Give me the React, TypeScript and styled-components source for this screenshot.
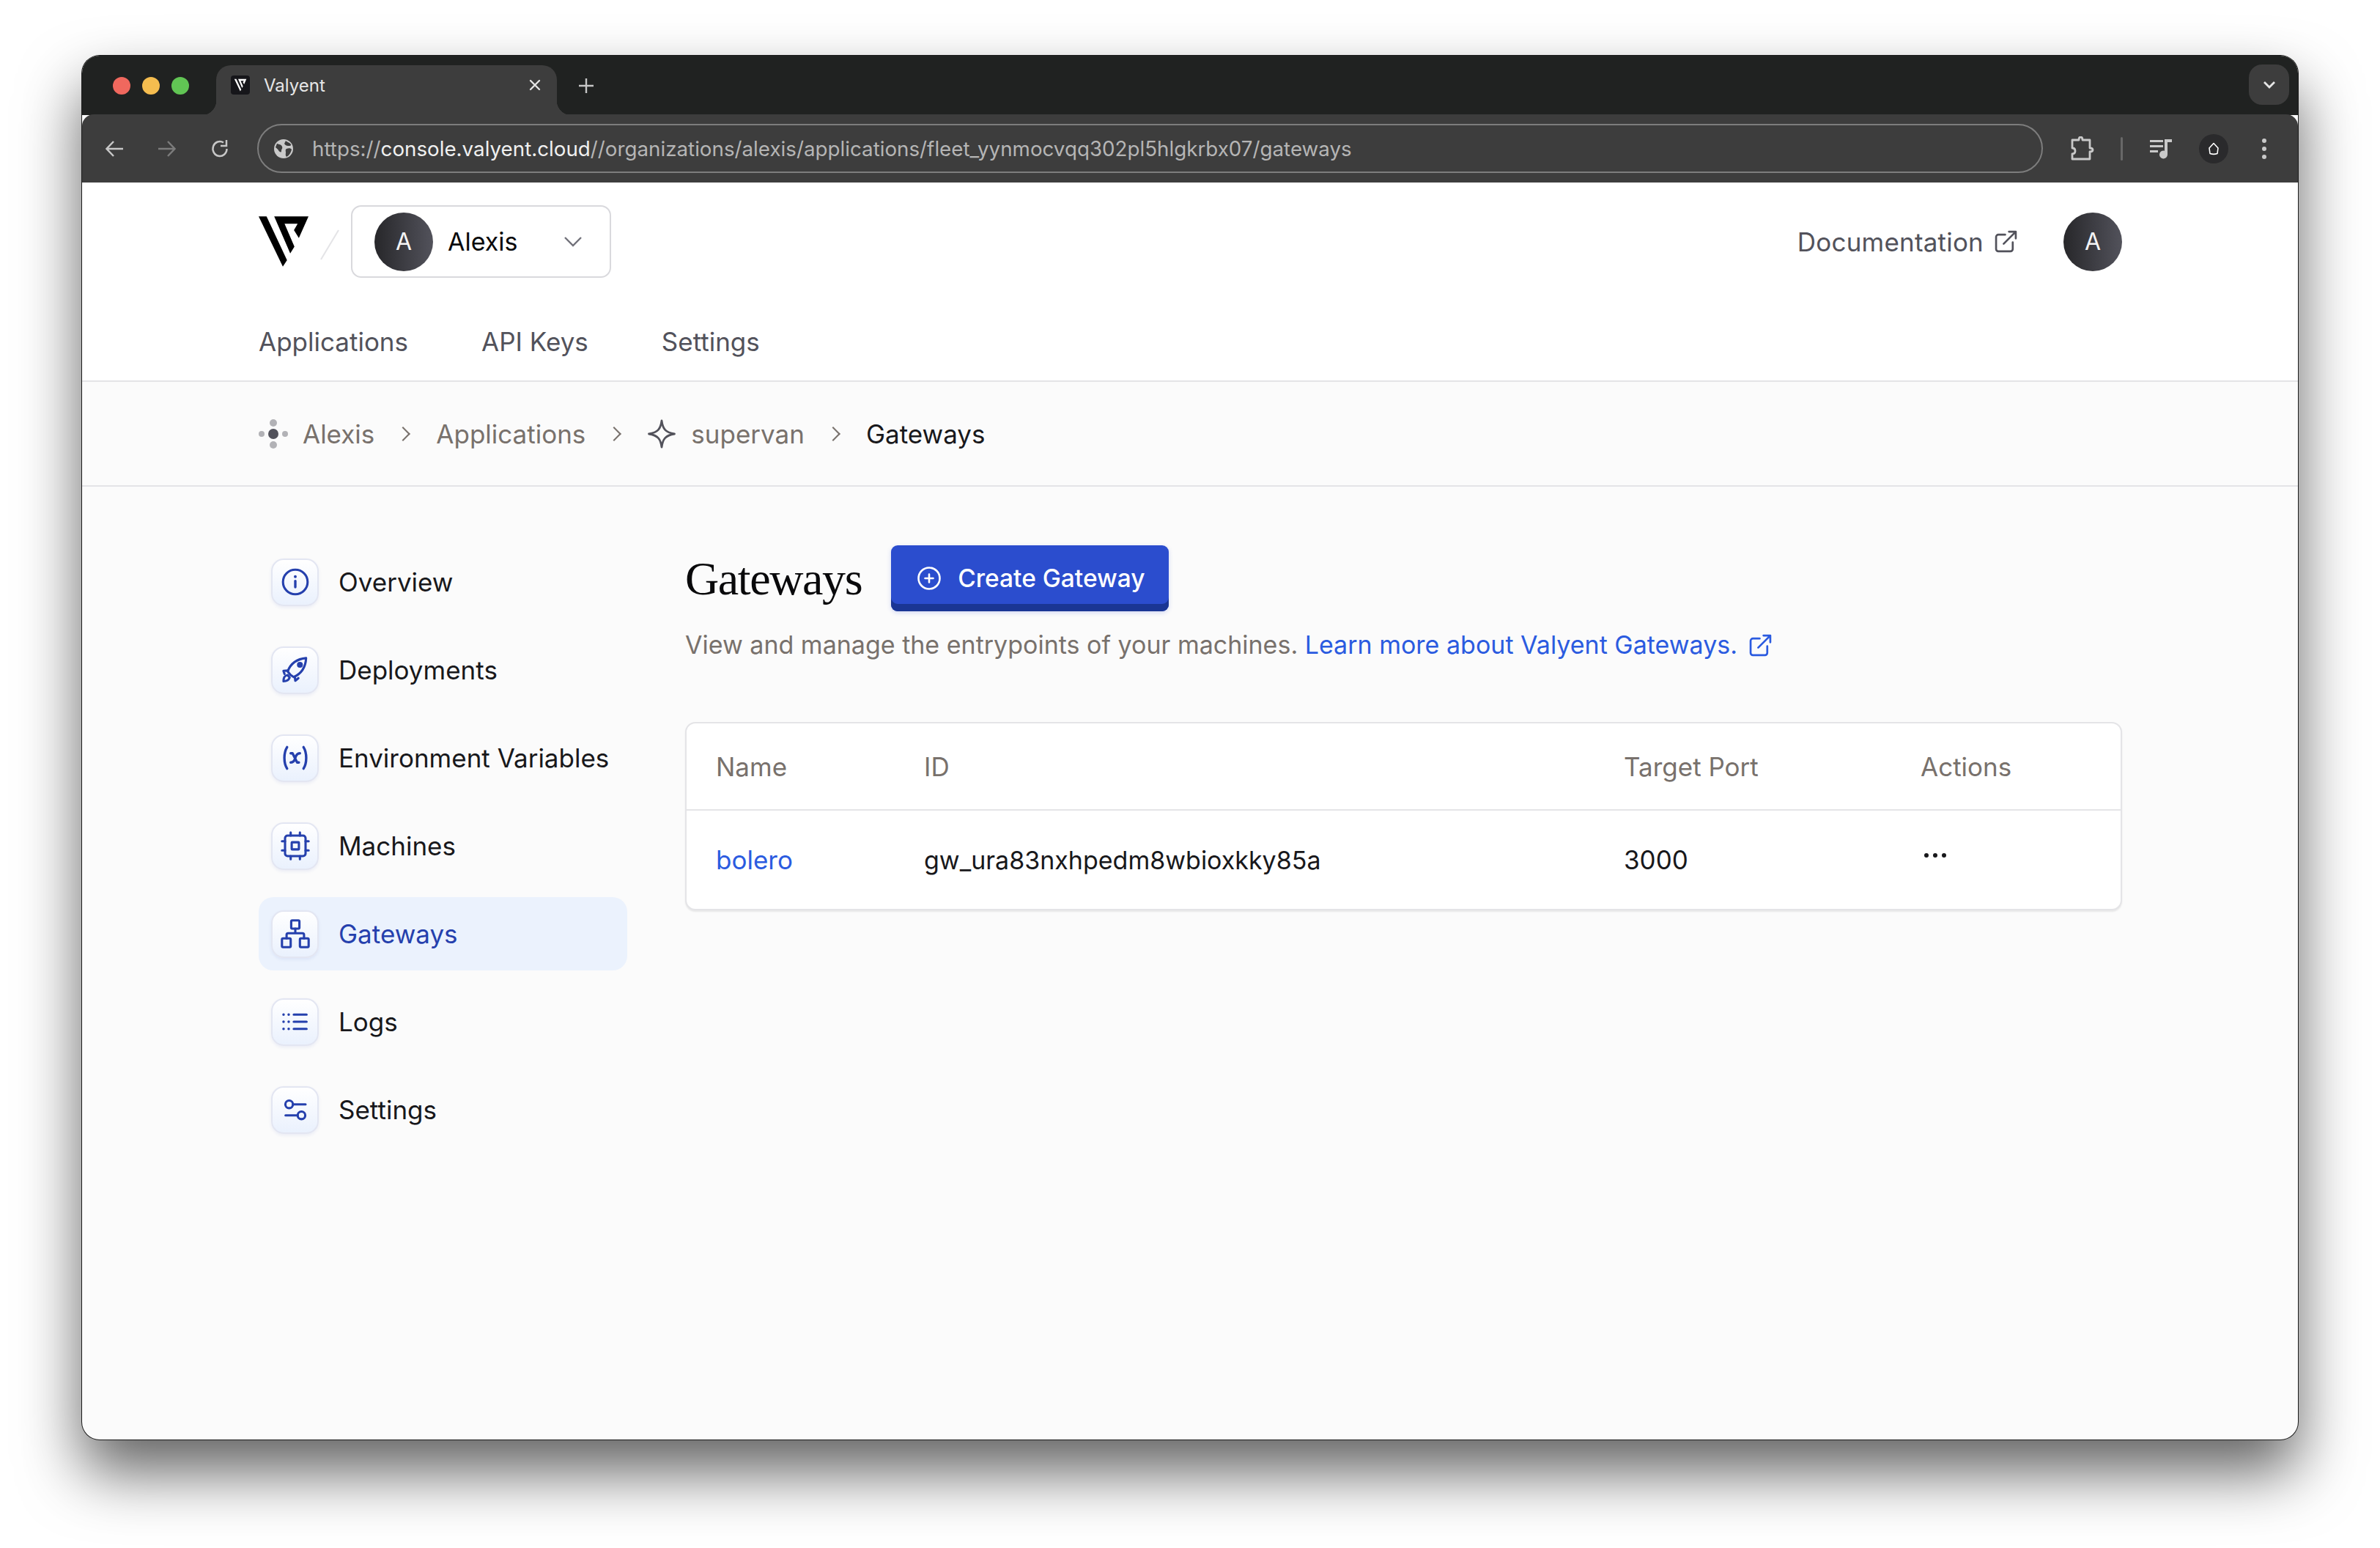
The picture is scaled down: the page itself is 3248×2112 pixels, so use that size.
import React from "react";
import styled, { createGlobalStyle } from "styled-components";

const ICON_BLUE = "#2540ad";

const GlobalStyle = createGlobalStyle`
  html, body {
    margin: 0;
    padding: 0;
    background: #fff;
    overflow: hidden;
  }
  * {
    box-sizing: border-box;
  }
  body {
    font-family: Inter, "Liberation Sans", sans-serif;
  }
`;

const ExternalIcon: React.FC<{ size: number; color: string }> = ({ size, color }) => (
  <svg width={size} height={size} viewBox="0 0 30 30" fill="none" stroke={color} strokeWidth="2.6" strokeLinecap="round" strokeLinejoin="round">
    <path d="M14 6H5a3 3 0 0 0-3 3v16a3 3 0 0 0 3 3h16a3 3 0 0 0 3-3v-9" />
    <path d="M12 18 27.5 2.5M19 2h9v9" />
  </svg>
);

const navIcons: Record<string, React.ReactNode> = {
  info: (
    <>
      <circle cx="15" cy="15" r="12" />
      <path d="M15 14v6" strokeWidth="2.4" />
      <path d="M15 9.800v.1" strokeWidth="2.800" />
    </>
  ),
  rocket: (
    <>
      <path d="M10.500 20 7.500 16.500C10 10 14.500 4.500 25.500 3.500c-.5 10.500-5.500 15.500-12 18.500Z" />
      <circle cx="19.500" cy="10" r="1.800" fill={ICON_BLUE} />
      <path d="M8 15.500 3.500 16l1 3M14.500 21.500l.5 4 3-2.500" />
      <path d="M7.500 20c-2.500.5-4 1.500-4 6 3.500 0 5-1 6-3.500Z" />
    </>
  ),
  variable: (
    <>
      <path d="M7 4.500C3.500 10 3.500 20 7 25.500M23 4.500c3.500 5.500 3.500 15.500 0 21" strokeWidth="2.400" />
      <path d="M10.500 10.500h1.800l4.500 9h1.700M19.500 10.500c-3 0-4 2.500-4.500 4.500s-2 4.500-4.500 4.500" strokeWidth="2.400" />
    </>
  ),
  cpu: (
    <>
      <rect x="5" y="5" width="20" height="20" rx="2.500" />
      <rect x="11.500" y="11.500" width="7" height="7" rx="0.500" />
      <path d="M10.500 2v3M19.500 2v3M10.500 25v3M19.500 25v3M2 10.500h3M2 19.500h3M25 10.500h3M25 19.500h3" />
    </>
  ),
  network: (
    <>
      <rect x="11" y="2" width="8" height="8" rx="1" />
      <rect x="2" y="19.500" width="8.500" height="8.500" rx="1" />
      <rect x="19.500" y="19.500" width="8.500" height="8.500" rx="1" />
      <path d="M15 10v4.500M6.500 19.500v-3.500a1.500 1.500 0 0 1 1.500-1.500h14a1.500 1.500 0 0 1 1.500 1.500v3.500" />
    </>
  ),
  list: (
    <>
      <path d="M3.500 8h.1M8.500 8h.1M3.500 15h.1M8.500 15h.1M3.500 22h.1M8.500 22h.1" strokeWidth="2.400" />
      <path d="M13.500 8h12.500M13.500 15h12.500M13.500 22h12.500" />
    </>
  ),
  sliders: (
    <>
      <circle cx="9" cy="9.800" r="3.700" />
      <path d="M12.700 9.800H25" />
      <circle cx="21" cy="20.500" r="3.700" />
      <path d="M5.500 20.500h11.800" />
    </>
  ),
};

const sideItems = [
  { label: "Overview", icon: "info" },
  { label: "Deployments", icon: "rocket" },
  { label: "Environment Variables", icon: "variable" },
  { label: "Machines", icon: "cpu" },
  { label: "Gateways", icon: "network", active: true },
  { label: "Logs", icon: "list" },
  { label: "Settings", icon: "sliders" },
];

const URL_TEXT = "/organizations/alexis/applications/fleet_yynmocvqq302pl5hlgkrbx07/gateways";

const App: React.FC = () => {
  return (
    <Stage>
      <GlobalStyle />
      <BrowserWindow>
        <TabStrip>
          <Lights>
            <Light color="#f0685e" />
            <Light color="#f5bd4f" />
            <Light color="#61c554" />
          </Lights>
          <Tab>
            <Favicon>
              <svg width="18" height="18" viewBox="30 25 220 215" fill="#fff">
                <path d="M40 32h32l83 178-17 25Z" />
                <path d="M103 32h139l-39 88-20-32 15-26h-53l40 93-17 27Z" />
              </svg>
            </Favicon>
            <TabTitle>Valyent</TabTitle>
            <TabClose>
              <svg width="16" height="16" viewBox="0 0 16 16" stroke="#e4e4e4" strokeWidth="2.400" strokeLinecap="round">
                <path d="M2 2l12 12M14 2 2 14" />
              </svg>
            </TabClose>
          </Tab>
          <NewTab>
            <svg width="22" height="22" viewBox="0 0 22 22" stroke="#c6c6c6" strokeWidth="2.400">
              <path d="M11 1v20M1 11h20" />
            </svg>
          </NewTab>
          <TabSearch>
            <svg width="18" height="12" viewBox="0 0 18 12" fill="none" stroke="#e6e6e6" strokeWidth="2.800">
              <path d="M2 2l7 7 7-7" />
            </svg>
          </TabSearch>
        </TabStrip>

        <Toolbar>
          <ToolButton>
            <svg width="26" height="26" viewBox="0 0 26 26" fill="none" stroke="#c7c7c7" strokeWidth="2.500">
              <path d="M25 13H3M12 3 2.500 13 12 23" />
            </svg>
          </ToolButton>
          <ToolButton>
            <svg width="26" height="26" viewBox="0 0 26 26" fill="none" stroke="#7c7c7c" strokeWidth="2.500">
              <path d="M1 13h22M14 3l9.500 10L14 23" />
            </svg>
          </ToolButton>
          <ToolButton>
            <svg width="26" height="26" viewBox="0 0 26 26" fill="none" stroke="#c7c7c7" strokeWidth="2.500">
              <path d="M22.500 13A9.500 10 0 1 1 18 4.500" />
              <path d="M22 1v8h-8" />
            </svg>
          </ToolButton>
          <AddressBar>
            <svg width="26" height="26" viewBox="0 0 26 26">
              <circle cx="13" cy="13" r="13" fill="#c9c9c9" />
              <path d="M4 6c3 1 6 1 7 4s-1 3-1 6-3 1-4-1-3-3-4-4ZM16 2c2 2 5 2 7 5 1 2-2 2-4 2s-4-1-5-3Zm1 11c3-1 6-1 7 1-1 4-3 8-7 10-2-2-1-4-1-6s-1-4 1-5Z" fill="#3d3d3d" />
            </svg>
            <UrlText>
              https://<UrlHost>console.valyent.cloud</UrlHost>/{URL_TEXT}
            </UrlText>
          </AddressBar>
          <ExtensionIcons>
            <svg width="34" height="34" viewBox="0 0 34 34" fill="none" stroke="#c9c9c9" strokeWidth="2.800" strokeLinejoin="round">
              <path d="M4 5h9c0-3 1-4 2.500-4S18 2 18 5h10v11c3 0 4 1 4 2.500S31 21 28 21v10H4v-7c3 0 4-2 4-4s-1-4-4-4Z" />
            </svg>
            <ToolDivider />
            <svg width="32" height="28" viewBox="0 0 32 28" fill="#c9c9c9">
              <path d="M1 2h18v3H1zM1 9h18v3H1zM1 16h11v3H1z" />
              <path d="M21 1h10v4h-6v17a5.500 5.500 0 1 1-4-5.300Z" />
            </svg>
            <ProfileBadge>
              <svg width="16" height="18" viewBox="0 0 16 18" fill="none" stroke="#fff" strokeWidth="1.600" strokeLinejoin="round">
                <path d="M8 1.500 14 8l-1 7.500c-3 1-7 1-10 0L2 8Z" />
              </svg>
            </ProfileBadge>
            <MenuDots>
              <Dot />
              <Dot />
              <Dot />
            </MenuDots>
          </ExtensionIcons>
        </Toolbar>

        <TopHeader>
          <HeaderRow>
            <Brand>
              <svg width="68" height="69" viewBox="40 32 202 204" fill="#000">
                <path d="M40 32h32l83 178-17 26Z" />
                <path d="M103 32h139l-39 88-20-32 15-26h-53l40 93-17 27Z" />
              </svg>
              <BrandSlash width="26" height="42" viewBox="0 0 26 42">
                <path d="M25 1 1 41" stroke="#e4e4e7" strokeWidth="2" />
              </BrandSlash>
              <OrgSelect>
                <Avatar>A</Avatar>
                <OrgName>Alexis</OrgName>
                <svg width="26" height="16" viewBox="0 0 26 16" fill="none" stroke="#71717a" strokeWidth="2.400">
                  <path d="M2 2l11 11L24 2" />
                </svg>
              </OrgSelect>
            </Brand>
            <HeaderRight>
              <DocLink>
                Documentation
                <ExternalIcon size={31} color="#52525b" />
              </DocLink>
              <Avatar>A</Avatar>
            </HeaderRight>
          </HeaderRow>
          <TopNav>
            <TopNavItem>Applications</TopNavItem>
            <TopNavItem>API Keys</TopNavItem>
            <TopNavItem>Settings</TopNavItem>
          </TopNav>
        </TopHeader>

        <Breadcrumbs>
          <CrumbIcon width="40" height="40" viewBox="0 0 40 40">
            <circle cx="20" cy="20" r="7" fill="#52525b" />
            <circle cx="20" cy="5" r="5" fill="#b2b2b6" />
            <circle cx="20" cy="35" r="5" fill="#b2b2b6" />
            <circle cx="4" cy="20" r="4" fill="#b2b2b6" />
            <circle cx="36" cy="20" r="4" fill="#b2b2b6" />
          </CrumbIcon>
          <Crumb>Alexis</Crumb>
          <CrumbSep />
          <Crumb>Applications</Crumb>
          <CrumbSep />
          <CrumbIcon width="40" height="40" viewBox="0 0 40 40" fill="none" stroke="#52525b" strokeWidth="2.800" strokeLinejoin="round">
            <path d="M20 2c1.500 11 5 16 17.500 18C25 22 21.500 27 20 38c-1.500-11-5-16-17.500-18C15 18 18.500 13 20 2Z" />
          </CrumbIcon>
          <Crumb>supervan</Crumb>
          <CrumbSep />
          <Crumb $current>Gateways</Crumb>
        </Breadcrumbs>

        <Main>
          <SideNav>
            {sideItems.map((item) => (
              <SideItem key={item.label} $active={item.active}>
                <IconBox>
                  <svg width="42" height="42" viewBox="0 0 30 30" fill="none" stroke={ICON_BLUE} strokeWidth="2.200" strokeLinecap="round" strokeLinejoin="round">
                    {navIcons[item.icon]}
                  </svg>
                </IconBox>
                {item.label}
              </SideItem>
            ))}
          </SideNav>

          <Content>
            <TitleRow>
              <PageTitle>Gateways</PageTitle>
              <CreateButton>
                <svg width="34" height="34" viewBox="0 0 34 34" fill="none" stroke="#fff" strokeWidth="2.600" strokeLinecap="round">
                  <circle cx="17" cy="17" r="14.500" />
                  <path d="M17 11.500v11M11.500 17h11" />
                </svg>
                Create Gateway
              </CreateButton>
            </TitleRow>
            <Description>
              View and manage the entrypoints of your machines.{" "}
              <DescLink>
                Learn more about Valyent Gateways.
                <ExternalIcon size={31} color="#2b5be0" />
              </DescLink>
            </Description>

            <TableCard>
              <TableHead>
                <span>Name</span>
                <span>ID</span>
                <span>Target Port</span>
                <span>Actions</span>
              </TableHead>
              <TableRow>
                <RowLink>bolero</RowLink>
                <GatewayId>gw_ura83nxhpedm8wbioxkky85a</GatewayId>
                <span>3000</span>
                <svg width="32" height="8" viewBox="0 0 32 8" fill="#18181b">
                  <circle cx="4" cy="4" r="3" />
                  <circle cx="16" cy="4" r="3" />
                  <circle cx="28" cy="4" r="3" />
                </svg>
              </TableRow>
            </TableCard>
          </Content>
        </Main>
      </BrowserWindow>
    </Stage>
  );
};
export default App;

const Stage = styled.div`
  width: 3248px;
  height: 2112px;
  padding: 76px 112px 148px 112px;
`;

const BrowserWindow = styled.div`
  width: 3024px;
  height: 1888px;
  display: flex;
  flex-direction: column;
  border-radius: 24px;
  overflow: hidden;
  background: #fbfbfb;
  box-shadow: 0 0 0 1px #1a1a1a, 0 44px 84px rgba(0, 0, 0, 0.62);
`;

const TabStrip = styled.div`
  height: 81px;
  flex: none;
  display: flex;
  align-items: flex-end;
  background: #202221;
  padding: 0 12px 0 42px;
`;

const Lights = styled.div`
  display: flex;
  gap: 16px;
  align-self: flex-start;
  margin-top: 29px;
  width: 141px;
`;

const Light = styled.span<{ color: string }>`
  width: 24px;
  height: 24px;
  border-radius: 50%;
  background: ${(p) => p.color};
`;

const Tab = styled.div`
  position: relative;
  width: 465px;
  height: 68px;
  display: flex;
  align-items: center;
  padding: 0 22px 14px 20px;
  background: #3d3d3d;
  border-radius: 20px 20px 0 0;

  &::before,
  &::after {
    content: "";
    position: absolute;
    bottom: 0;
    width: 20px;
    height: 20px;
  }
  &::before {
    left: -20px;
    background: radial-gradient(circle at 0 0, transparent 20px, #3d3d3d 20.5px);
  }
  &::after {
    right: -20px;
    background: radial-gradient(circle at 100% 0, transparent 20px, #3d3d3d 20.5px);
  }
`;

const Favicon = styled.span`
  width: 26px;
  height: 26px;
  display: flex;
  align-items: center;
  justify-content: center;
  background: #16161a;
  border-radius: 4px;
`;

const TabTitle = styled.span`
  margin-left: 19px;
  font-size: 24px;
  color: #e6e6e6;
  flex: 1;
`;

const TabClose = styled.span`
  display: flex;
`;

const NewTab = styled.span`
  display: flex;
  align-self: center;
  margin-left: 29px;
`;

const TabSearch = styled.span`
  width: 55px;
  height: 55px;
  margin-left: auto;
  align-self: flex-start;
  margin-top: 12px;
  display: flex;
  align-items: center;
  justify-content: center;
  background: #3d3d3d;
  border-radius: 18px;
`;

const Toolbar = styled.div`
  height: 93px;
  flex: none;
  display: flex;
  align-items: center;
  gap: 46px;
  padding: 0 30px 0 31px;
  background: #3d3d3d;
  border-radius: 16px 16px 0 0;
  margin-top: -1px;
`;

const ToolButton = styled.span`
  display: flex;
  width: 26px;
`;

const AddressBar = styled.div`
  width: 2437px;
  height: 67px;
  margin-left: -8px;
  display: flex;
  align-items: center;
  gap: 26px;
  padding-left: 21px;
  border: 2px solid #7d7d7d;
  border-radius: 34px;
`;

const UrlText = styled.span`
  font-size: 27.75px;
  color: #b5b5b5;
  white-space: nowrap;
`;

const UrlHost = styled.span`
  color: #f0f0f0;
`;

const ExtensionIcons = styled.div`
  display: flex;
  align-items: center;
  margin-left: -10px;
  gap: 36px;
`;

const ToolDivider = styled.span`
  width: 3px;
  height: 32px;
  border-radius: 2px;
  background: #686868;
`;

const ProfileBadge = styled.span`
  width: 40px;
  height: 40px;
  display: flex;
  align-items: center;
  justify-content: center;
  background: #2a2a2c;
  border-radius: 50%;
`;

const MenuDots = styled.span`
  display: flex;
  flex-direction: column;
  gap: 5px;
  margin-left: 10px;
`;

const Dot = styled.span`
  width: 6px;
  height: 6px;
  border-radius: 50%;
  background: #c9c9c9;
`;

const TopHeader = styled.header`
  height: 272px;
  flex: none;
  background: #fff;
  border-bottom: 2px solid #e4e4e7;
  padding: 31px 240px 0 241px;
`;

const HeaderRow = styled.div`
  display: flex;
  align-items: center;
  justify-content: space-between;
  height: 99px;
`;

const Brand = styled.div`
  display: flex;
  align-items: center;
`;

const BrandSlash = styled.svg`
  margin: 8px 16px 0 16px;
`;

const OrgSelect = styled.div`
  width: 355px;
  height: 99px;
  display: flex;
  align-items: center;
  padding: 0 37px 0 30px;
  background: #fff;
  border: 2px solid #d9d9dd;
  border-radius: 14px;
`;

const Avatar = styled.span`
  width: 80px;
  height: 80px;
  flex: none;
  display: flex;
  align-items: center;
  justify-content: center;
  border-radius: 50%;
  background: linear-gradient(90deg, #27272a, #52525b);
  color: #f4f4f5;
  font-size: 32px;
`;

const OrgName = styled.span`
  margin-left: 20px;
  font-size: 34px;
  color: #09090b;
  flex: 1;
`;

const HeaderRight = styled.div`
  display: flex;
  align-items: center;
  gap: 63px;
`;

const DocLink = styled.span`
  display: flex;
  align-items: center;
  gap: 15px;
  font-size: 35px;
  letter-spacing: 0.2px;
  color: #52525b;
`;

const TopNav = styled.nav`
  display: flex;
  gap: 100px;
  margin-top: 65px;
`;

const TopNavItem = styled.span`
  font-size: 35px;
  line-height: 44px;
  color: #52525b;
`;

const Breadcrumbs = styled.div`
  height: 143px;
  flex: none;
  display: flex;
  align-items: center;
  padding-left: 241px;
  border-bottom: 2px solid #e4e4e7;
`;

const CrumbIcon = styled.svg`
  margin-right: 20px;
`;

const Crumb = styled.span<{ $current?: boolean }>`
  font-size: 35px;
  color: ${(p) => (p.$current ? "#18181b" : "#78716c")};
`;

const CrumbSep = styled.span`
  width: 14px;
  height: 14px;
  margin: 0 38px 0 32px;
  border-top: 2.500px solid #78716c;
  border-right: 2.500px solid #78716c;
  transform: rotate(45deg);
`;

const Main = styled.main`
  flex: 1;
  display: flex;
  padding: 80px 240px 0 241px;
`;

const SideNav = styled.nav`
  width: 503px;
  flex: none;
  display: flex;
  flex-direction: column;
  gap: 20px;
`;

const SideItem = styled.div<{ $active?: boolean }>`
  height: 100px;
  display: flex;
  align-items: center;
  gap: 27px;
  padding-left: 17px;
  border-radius: 20px;
  font-size: 35px;
  background: ${(p) => (p.$active ? "#ebf2fd" : "transparent")};
  color: ${(p) => (p.$active ? "#2540ad" : "#18181b")};
`;

const IconBox = styled.span`
  width: 65px;
  height: 65px;
  display: flex;
  align-items: center;
  justify-content: center;
  border: 2.500px solid #e3e6f2;
  border-radius: 17px;
  background: linear-gradient(180deg, #fff, #eaf1fd);
  box-shadow: 0 2px 4px rgba(37, 64, 173, 0.08);
`;

const Content = styled.section`
  flex: 1;
  margin-left: 79px;
`;

const TitleRow = styled.div`
  display: flex;
  align-items: center;
  gap: 40px;
`;

const PageTitle = styled.h1`
  margin: 2px 0 0;
  font-family: "Liberation Serif", serif;
  font-weight: 400;
  font-size: 64px;
  letter-spacing: -1.4px;
  color: #09090b;
`;

const CreateButton = styled.button`
  width: 379px;
  height: 90px;
  display: flex;
  align-items: center;
  gap: 22px;
  padding: 0 0 0 35px;
  border: none;
  border-radius: 9px;
  background: #2b4dce;
  box-shadow: inset 0 -10px 0 #1a3694, 0 2px 6px rgba(43, 77, 206, 0.2);
  color: #fff;
  font-family: inherit;
  font-size: 33.5px;
  font-weight: 500;
`;

const Description = styled.p`
  margin: 23px 0 0;
  font-size: 34px;
  line-height: 46px;
  color: #78716c;
`;

const DescLink = styled.span`
  display: inline-flex;
  align-items: center;
  gap: 16px;
  color: #2b5be0;
  vertical-align: top;
`;

const TableCard = styled.div`
  margin-top: 82px;
  background: #fff;
  border: 2px solid #e4e4e7;
  border-radius: 14px;
  box-shadow: 0 2px 2px rgba(0, 0, 0, 0.08);
`;

const tableColumns = "284px 955px 405px 1fr";

const TableHead = styled.div`
  height: 119px;
  display: grid;
  grid-template-columns: ${tableColumns};
  align-items: center;
  padding-left: 40px;
  border-bottom: 2px solid #e4e4e7;
  font-size: 35px;
  color: #78716c;
`;

const TableRow = styled.div`
  height: 134px;
  display: grid;
  grid-template-columns: ${tableColumns};
  align-items: center;
  padding-left: 40px;
  font-size: 35px;
  color: #18181b;

  svg {
    margin: -12px 0 0 4px;
  }
`;

const RowLink = styled.span`
  color: #2b5be0;
`;

const GatewayId = styled.span`
  font-size: 34px;
`;
